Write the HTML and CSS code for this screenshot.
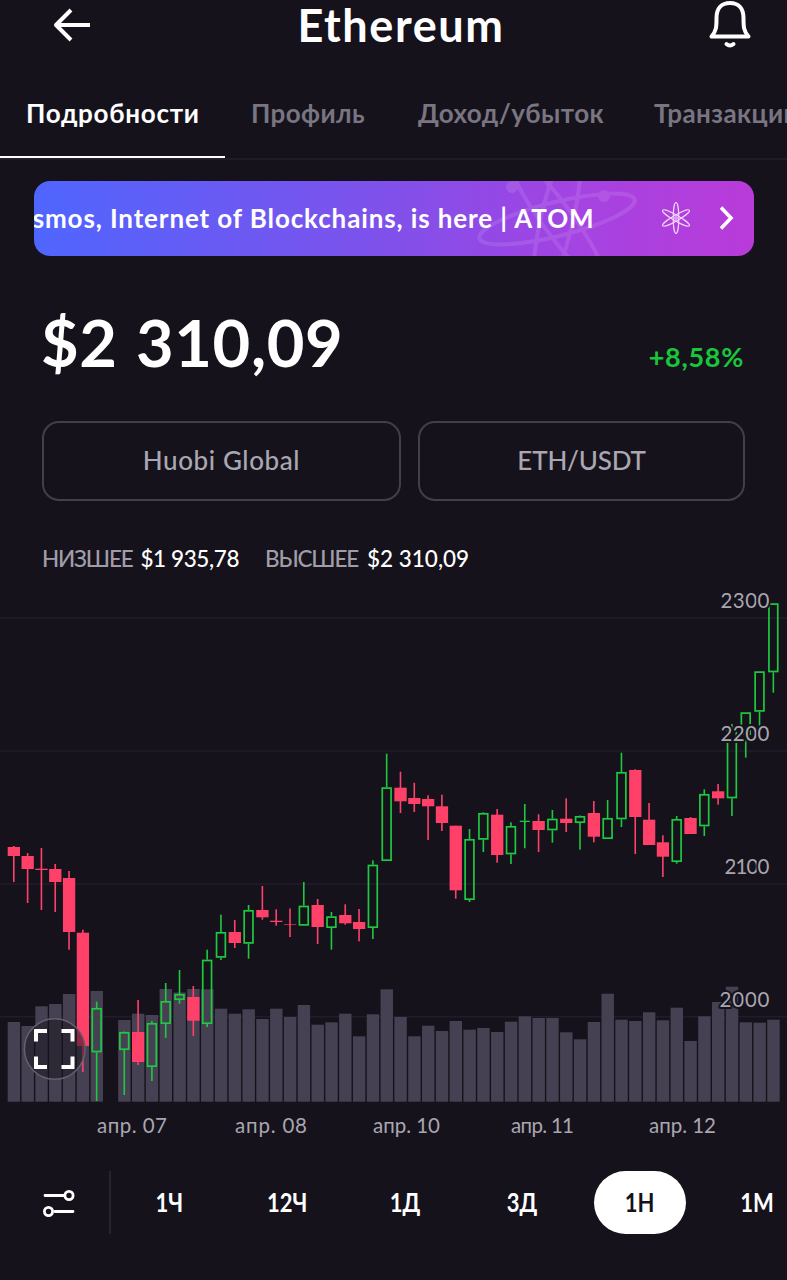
FILE: index.html
```html
<!DOCTYPE html>
<html lang="ru">
<head>
    <meta charset="UTF-8">
    <meta name="viewport" content="width=device-width, initial-scale=1.0">
    <title>Ethereum</title>
    <link rel="stylesheet" href="styles.css">
</head>
<body>
    <header class="header">
        <svg class="back" width="40" height="36" viewBox="0 0 40 36">
            <path d="M38 18H4M19 3L4 18l15 15"/>
        </svg>
        <h1>Ethereum</h1>
        <svg class="bell" width="46" height="50" viewBox="0 0 46 50">
            <path d="M4.500 36.500H41.500C36.500 31 36.500 26.500 36.500 18C36.500 8.500 31.500 3 23 3S9.500 8.500 9.500 18C9.500 26.500 9.500 31 4.500 36.500Z"/>
            <path d="M19.500 44q3.500 3 7 0"/>
        </svg>
    </header>

    <nav class="tabs">
        <a class="tab active">Подробности</a>
        <a class="tab profile">Профиль</a>
        <a class="tab income">Доход/убыток</a>
        <a class="tab">Транзакции</a>
    </nav>

    <div class="banner">
        <svg class="banner-art" width="170" height="75" viewBox="0 0 170 75">
            <ellipse cx="86" cy="38" rx="80" ry="17" transform="rotate(-14 86 38)"/>
            <ellipse cx="86" cy="38" rx="80" ry="15" transform="rotate(54 86 38)"/>
            <ellipse cx="86" cy="38" rx="80" ry="16" transform="rotate(103 86 38)"/>
            <circle cx="41" cy="6" r="6"/>
            <circle cx="133" cy="15" r="6"/>
        </svg>
        <div class="banner-text"><span>Cosmos, Internet of Blockchains, is here | ATOM</span></div>
        <svg class="atom" width="32" height="34" viewBox="0 0 32 34">
            <ellipse cx="16" cy="17" rx="2.800" ry="15.500"/>
            <ellipse cx="16" cy="17" rx="2.800" ry="15.500" transform="rotate(60 16 17)"/>
            <ellipse cx="16" cy="17" rx="2.800" ry="15.500" transform="rotate(120 16 17)"/>
            <circle cx="16" cy="17" r="1.200"/>
        </svg>
        <svg class="chevron" width="18" height="26" viewBox="0 0 18 26">
            <path d="M4 2.500L14 13L4 23.500"/>
        </svg>
    </div>

    <div class="price-row">
        <div class="price">$2 310,09</div>
        <div class="change">+8,58%</div>
    </div>

    <div class="selectors">
        <button class="exchange">Huobi Global</button>
        <button class="pair">ETH/USDT</button>
    </div>

    <div class="stats">
        <div class="stat low"><span>НИЗШЕЕ</span> <b>$1 935,78</b></div>
        <div class="stat high"><span>ВЫСШЕЕ</span> <b>$2 310,09</b></div>
    </div>

    <svg id="chart" class="chart" width="787" height="560" viewBox="0 590 787 560"></svg>

    <footer class="ranges">
        <div class="settings">
            <svg width="34" height="30" viewBox="0 0 34 30">
                <path d="M3 6.500h19M13 22.500h18"/>
                <circle cx="27" cy="6.500" r="4.100"/>
                <circle cx="6.500" cy="22.500" r="4.100"/>
            </svg>
        </div>
        <div class="range"><span>1Ч</span></div>
        <div class="range"><span>12Ч</span></div>
        <div class="range"><span>1Д</span></div>
        <div class="range"><span>3Д</span></div>
        <div class="range active"><span>1Н</span></div>
        <div class="range"><span>1М</span></div>
    </footer>

    <script src="chart.js"></script>
</body>
</html>
```
FILE: styles.css
```css
* {
    box-sizing: border-box;
}

body {
    margin: 0;
    width: 787px;
    height: 1280px;
    overflow: hidden;
    background-color: #15121c;
    color: #fff;
    font-family: Lato, "Open Sans", sans-serif;
}

svg {
    display: block;
    flex: none;
}

.header {
    display: flex;
    align-items: center;
    justify-content: space-between;
    height: 69px;
    padding: 0 34px 19px 52px;
}

.back,
.bell {
    fill: none;
    stroke: #fff;
    stroke-width: 4;
    stroke-linejoin: round;
}

.bell {
    stroke-linecap: round;
}

h1 {
    margin: 0 0 0 3px;
    font-size: 45px;
    line-height: 50px;
    font-weight: bold;
    letter-spacing: 1.6px;
}

.tabs {
    display: flex;
    height: 91px;
    border-bottom: 2px solid #1f1c29;
    overflow: hidden;
}

.tab {
    flex: none;
    height: 90px;
    padding: 28px 0 0 26px;
    font-size: 26px;
    line-height: 32px;
    font-weight: bold;
    letter-spacing: 0.4px;
    white-space: nowrap;
    color: #797581;
}

.tab.active {
    width: 225px;
    color: #fff;
    letter-spacing: 0.7px;
    border-bottom: 3px solid #fff;
}

.tab.profile {
    width: 167px;
}

.tab.income {
    width: 236px;
}

.banner {
    position: relative;
    display: flex;
    align-items: center;
    width: 720px;
    height: 75px;
    margin: 21px 0 0 33.5px;
    border-radius: 16px;
    overflow: hidden;
    background: linear-gradient(90deg, #4f66fe, #8150ea 50%, #a444e2 75%, #b93bd9);
}

/* faded atom behind the text */
.banner-art {
    position: absolute;
    left: 437px;
    top: 0;
    opacity: 0.1;
    fill: none;
    stroke: #fff;
    stroke-width: 4;
}

.banner-art circle {
    fill: #fff;
    stroke: none;
}

.banner-text {
    position: relative;
    display: flex;
    justify-content: flex-end;
    width: 561px;
    margin-right: 65.5px;
    padding-bottom: 1px;
    overflow: hidden;
    font-size: 26px;
    line-height: 36px;
    font-weight: bold;
    letter-spacing: 0.88px;
    white-space: nowrap;
}

.atom {
    margin-top: -1px;
    fill: none;
    stroke: #f3d9fa;
    stroke-width: 1.1;
}

.chevron {
    margin: -1px 0 0 25px;
    fill: none;
    stroke: #fff;
    stroke-width: 3.6;
}

.price-row {
    display: flex;
    justify-content: space-between;
    align-items: baseline;
    height: 165px;
    padding: 46px 43px 0 41px;
}

.price {
    font-size: 65px;
    line-height: 80px;
    font-weight: bold;
    letter-spacing: 0.6px;
    word-spacing: 2px;
}

.change {
    font-size: 27px;
    font-weight: bold;
    letter-spacing: 0.7px;
    color: #19c63b;
}

.selectors {
    display: flex;
    gap: 17px;
    padding: 0 42px;
}

.selectors button {
    height: 80px;
    padding-bottom: 4px;
    border: 2px solid #423f4b;
    border-radius: 17px;
    background: none;
    color: #aaa7b1;
    font-family: inherit;
    font-size: 26px;
    font-weight: 500;
}

.selectors .exchange {
    width: 359px;
    letter-spacing: 0.6px;
}

.selectors .pair {
    width: 327px;
    letter-spacing: -0.2px;
}

.stats {
    display: flex;
    height: 89px;
    padding: 43px 0 0 42px;
    font-size: 22.5px;
    line-height: 30px;
    white-space: nowrap;
}

.stat {
    display: flex;
    gap: 8px;
}

.stat.low {
    width: 223px;
}

.stat.high {
    gap: 9px;
}

.stat span {
    color: #a09da8;
    font-weight: 500;
    letter-spacing: -1.2px;
}

.stat b {
    font-weight: 500;
    letter-spacing: -0.4px;
}

.stat.high b {
    letter-spacing: 0;
}

.chart .grid {
    stroke: #201d2a;
    stroke-width: 1.5;
}

.chart .volume {
    fill: #464152;
}

.chart .down {
    fill: #ff416a;
}

.chart .up-wick {
    fill: #1fc840;
}

.chart .up-body {
    fill: none;
    stroke: #1fc840;
    stroke-width: 1.7;
}

.chart text {
    fill: #a9a6b0;
    font-size: 20.5px;
}

.chart .price-label {
    paint-order: stroke;
    stroke: #15121c;
    stroke-width: 4px;
    stroke-linejoin: round;
}

.chart .expand-bg {
    fill: #15121c;
    fill-opacity: 0.5;
    stroke: #64606e;
    stroke-width: 1.5;
}

.chart .expand {
    fill: none;
    stroke: #fff;
    stroke-width: 4;
}

.ranges {
    display: flex;
    margin-top: 20.5px;
}

.settings {
    flex: none;
    width: 111px;
    height: 63px;
    padding: 18px 0 0 42px;
    border-right: 2px solid #272431;
}

.settings svg {
    fill: none;
    stroke: #fff;
    stroke-width: 2.8;
    stroke-linecap: round;
}

.range {
    display: flex;
    flex: none;
    justify-content: center;
    align-items: center;
    width: 92px;
    height: 63px;
    margin: 0 12.75px;
    padding-bottom: 2px;
    border-radius: 32px;
    font-size: 27.5px;
    font-weight: bold;
}

.range span {
    transform: scaleX(0.8);
}

.range.active {
    background-color: #fff;
    color: #15121c;
}
```
FILE: chart.js
```js
var svg = document.getElementById('chart');
var step = 13.81;
var bottom = 1101.7;

// [type, high, low, body top, body bottom, volume top]
var candles = [
    ['d', 846, 882, 847, 856, 1022],
    ['d', 853, 903, 856, 869, 1026],
    ['d', 848, 910, 868.7, 870, 1006.3],
    ['d', 864, 912, 869, 882, 1004],
    ['d', 871, 949.7, 878, 932, 994],
    ['d', 929.7, 1072, 932.7, 1046, 1040],
    ['u', 1001.7, 1101, 1008, 1052.3, 991],
    null,
    ['u', 1031.5, 1095, 1032, 1050, 1020],
    ['d', 1000, 1065, 1032, 1062, 1013.7],
    ['u', 1021, 1081, 1023, 1067, 1015],
    ['u', 983, 1038, 1001, 1024, 989],
    ['u', 970, 1003.7, 994, 1000, 992.5],
    ['d', 986, 1036, 997, 1020.7, 989],
    ['u', 949.7, 1027, 959.7, 1024, 989.3],
    ['u', 914.7, 960, 932, 957.7, 1008.7],
    ['d', 920, 948, 932, 943, 1013.7],
    ['u', 905, 958.7, 910, 943.7, 1009.3],
    ['d', 886, 919.7, 910, 917.3, 1019],
    ['d', 909.3, 925.7, 920.7, 922, 1008.7],
    ['d', 908.5, 937, 924, 924.6, 1017],
    ['u', 882, 925.7, 905.7, 925.7, 1005],
    ['d', 899, 944, 905, 927, 1024.7],
    ['u', 912, 949.7, 916.3, 928, 1022.3],
    ['d', 904.3, 924.7, 915, 923.3, 1013.7],
    ['d', 909, 941.3, 922, 929, 1036.3],
    ['u', 860.3, 939, 864.7, 928, 1014.3],
    ['u', 753.7, 861, 787.3, 861, 989.3],
    ['d', 771.7, 813, 787.7, 801.3, 1017],
    ['d', 782.7, 812, 798, 804, 1036.3],
    ['d', 795.3, 840, 799, 806.3, 1025.7],
    ['d', 794.7, 831, 806.3, 823, 1031],
    ['d', 825.7, 898.7, 825.7, 890.3, 1021],
    ['u', 829, 902, 839, 900, 1029.7],
    ['u', 812.3, 852, 813, 839.7, 1028],
    ['d', 809, 862.7, 814.7, 855, 1032],
    ['u', 822.3, 864, 826, 854.3, 1021.7],
    ['u', 804, 848.3, 820.7, 822, 1016.3],
    ['d', 814.3, 852, 821, 830, 1018],
    ['u', 810, 842.7, 818.7, 830.3, 1018],
    ['d', 798.3, 832, 818.7, 823, 1032.3],
    ['u', 815.5, 849.7, 816, 823, 1039.3],
    ['d', 801, 842.3, 813, 836.7, 1022],
    ['u', 800, 839, 818, 839, 993.7],
    ['u', 752.7, 827, 772, 819.3, 1019.7],
    ['d', 769.3, 854, 770, 817, 1021],
    ['d', 803, 845, 819.7, 845, 1012.3],
    ['d', 835.3, 877, 842.3, 856.7, 1020.3],
    ['u', 816, 863.7, 819, 862, 1007.7],
    ['d', 817, 834, 818, 834, 1041],
    ['u', 789.3, 836, 794, 826.3, 1016.3],
    ['d', 784, 804.7, 791.3, 798.3, 1002],
    ['u', 724, 816, 730, 798.3, 986.7],
    ['u', 712.3, 757.7, 712.3, 735, 1022.3],
    ['u', 671.3, 736, 671.3, 711.7, 1022.7],
    ['u', 603.3, 692.7, 603.3, 672.3, 1019.7]
];

function add(tag, attrs, text) {
    var el = document.createElementNS('http://www.w3.org/2000/svg', tag);
    for (var key in attrs) {
        el.setAttribute(key, attrs[key]);
    }
    if (text) {
        el.textContent = text;
    }
    svg.appendChild(el);
}

function rect(cls, x, y, width, height) {
    add('rect', { 'class': cls, x: x, y: y, width: width, height: height });
}

[618, 751, 884, 1016.7].forEach(function(y) {
    add('line', { 'class': 'grid', x1: 0, x2: 787, y1: y, y2: y });
});

candles.forEach(function(c, i) {
    if (c) {
        rect('volume', 13.8 + i * step - 6.1, c[5], 12.4, bottom - c[5]);
    }
});

candles.forEach(function(c, i) {
    if (!c) return;
    var x = 13.8 + i * step;
    if (c[0] === 'd') {
        rect('down', x - 0.8, c[1], 1.6, c[2] - c[1]);
        rect('down', x - 6.1, c[3], 12.3, c[4] - c[3]);
    } else {
        rect('up-wick', x - 0.8, c[1], 1.6, c[3] - c[1]);
        rect('up-wick', x - 0.8, c[4], 1.6, c[2] - c[4]);
        if (c[4] - c[3] < 2) {
            rect('up-wick', x - 5, c[3], 10, c[4] - c[3]);
            rect('up-wick', x - 0.8, c[3], 1.6, 2);
        } else {
            rect('up-body', x - 4.4, c[3] + 0.8, 8.8, c[4] - c[3] - 1.6);
        }
    }
});

// price labels
[['2300', 607.5, 49], ['2200', 740.5, 49], ['2100', 873.5, 45], ['2000', 1006.5, 50]].forEach(function(l) {
    add('text', { 'class': 'price-label', x: 769.5 - l[2], y: l[1], textLength: l[2] }, l[0]);
});

// dates
[['апр. 07', 97, 70], ['апр. 08', 235, 72], ['апр. 10', 373, 67], ['апр. 11', 511, 63], ['апр. 12', 649, 67]].forEach(function(l) {
    add('text', { x: l[1], y: 1133, textLength: l[2] }, l[0]);
});

// fullscreen button
add('circle', { 'class': 'expand-bg', cx: 54.7, cy: 1049, r: 30.3 });
add('path', { 'class': 'expand', d: 'M36 1041.500v-10.500h11M61.500 1031h11v10.500M72.500 1056.500v10.500h-11M47 1067h-11v-10.500' });
```
